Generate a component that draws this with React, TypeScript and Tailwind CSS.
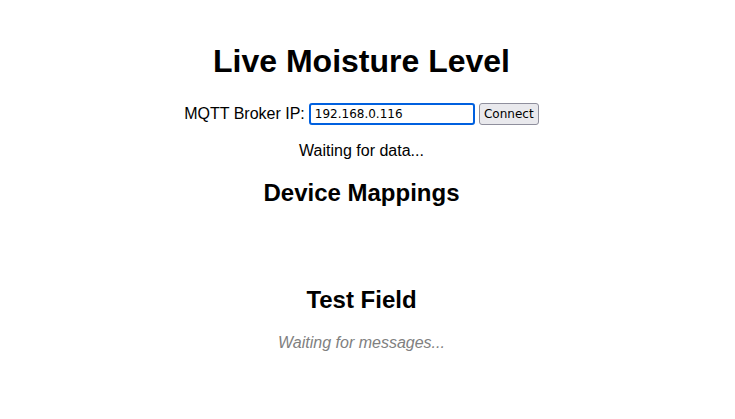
export default function App() {
  return (
    <div className="min-h-screen bg-white text-black text-center pl-[10px] pr-[22px] pt-[1px]" style={{ fontFamily: '"Liberation Sans", Arial, sans-serif' }}>
      <h1 className="text-[32px] font-bold leading-[37px] mt-[42px] mb-[23px]">Live Moisture Level</h1>

      <div className="flex items-center justify-center text-base leading-[18px]">
        <label htmlFor="broker">MQTT Broker IP:</label>
        <input
          id="broker"
          defaultValue="192.168.0.116"
          className="ml-[4px] w-[166px] h-[22px] px-[4px] border-2 border-[#0060df] rounded-[3px] text-[12px] outline-none"
          style={{ fontFamily: '"DejaVu Sans", sans-serif' }}
        />
        <button
          className="ml-[4px] w-[60px] h-[22px] bg-[#e9e9ed] border border-[#8f8f9d] rounded-[3px] text-[12px] font-medium"
          style={{ fontFamily: '"DejaVu Sans", sans-serif' }}
        >
          Connect
        </button>
      </div>

      <p className="mt-[17px] mb-4 text-base leading-[18px]">Waiting for data...</p>

      <h2 className="text-[24px] font-bold leading-[28px] mt-[19px] mb-[20px]">Device Mappings</h2>
      <div className="h-[39px]" />

      <h2 className="text-[24px] font-bold leading-[28px] mt-[20px] mb-[20px]">Test Field</h2>
      <p className="text-base leading-[18px] italic text-[#808080]">Waiting for messages...</p>
    </div>
  );
}
